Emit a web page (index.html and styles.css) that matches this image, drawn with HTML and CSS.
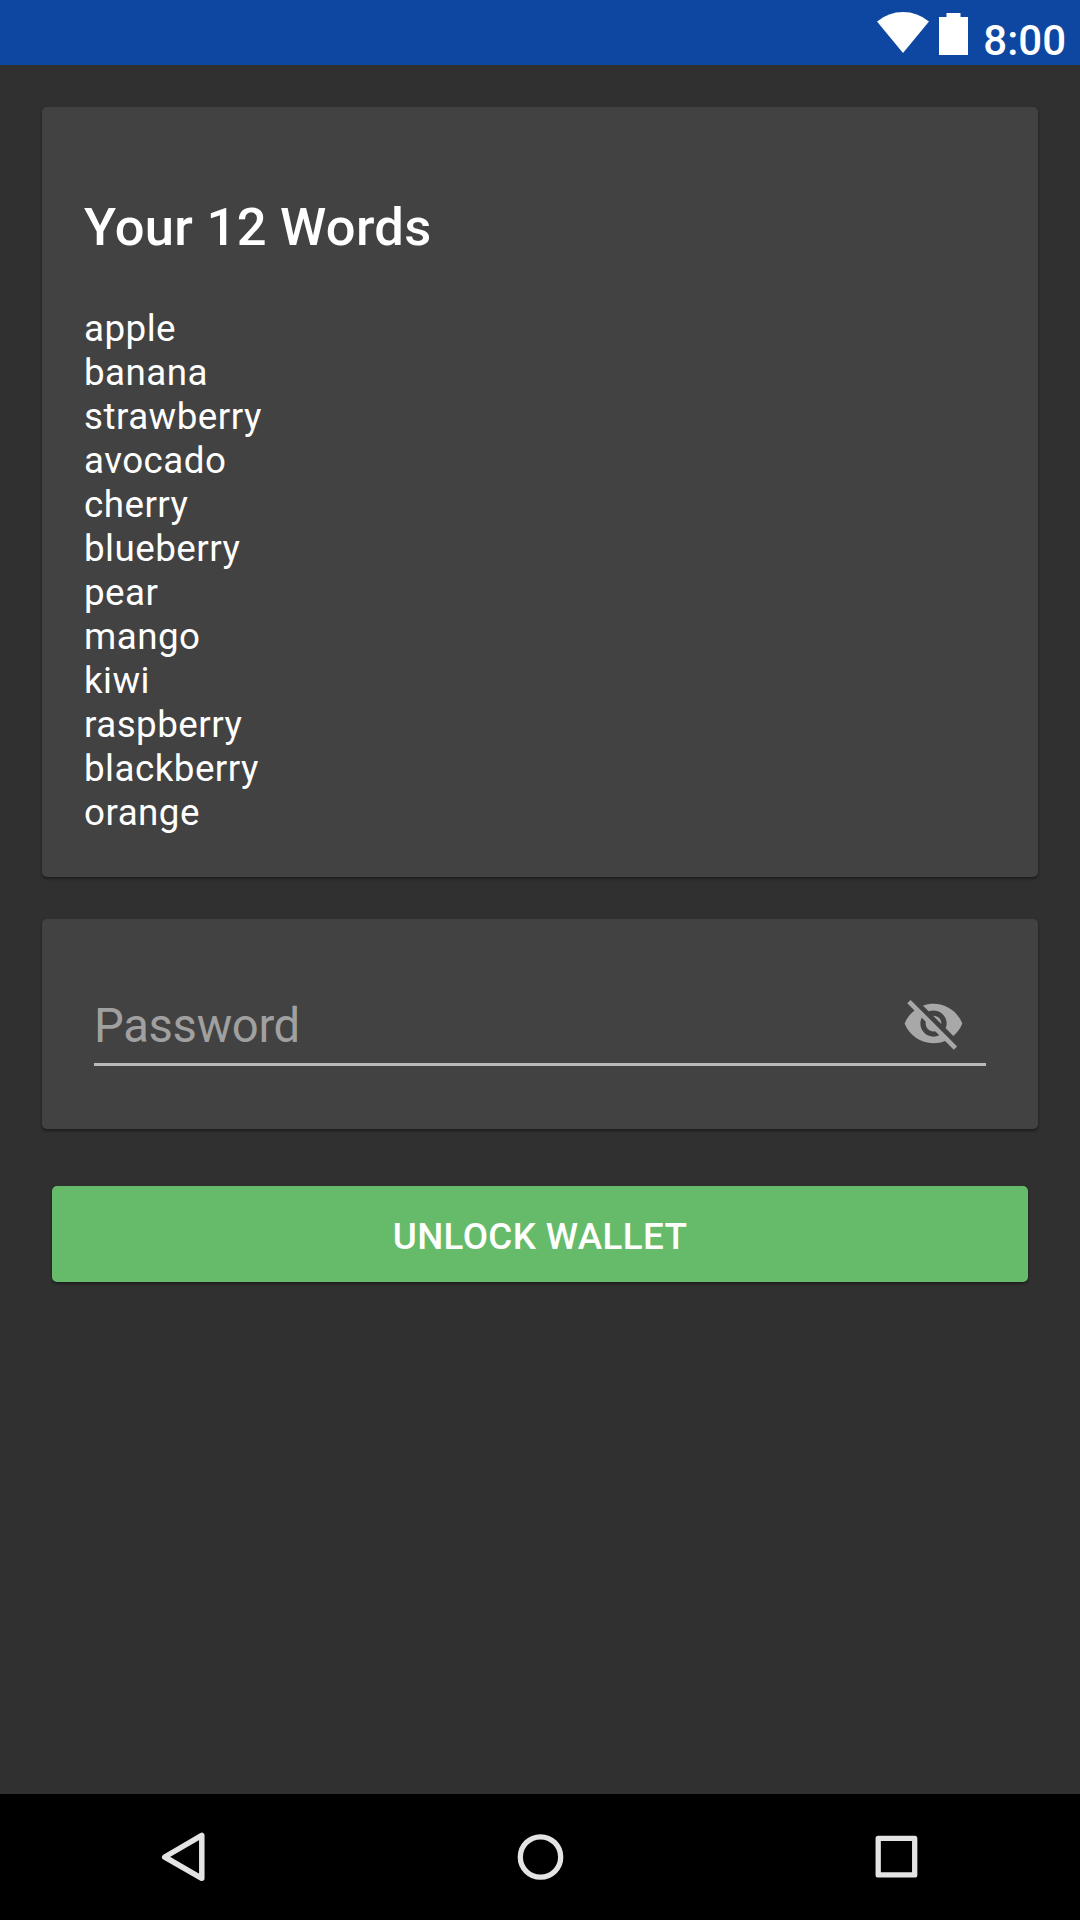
FILE: index.html
```html
<!DOCTYPE html>
<html lang="en">
<head>
<meta charset="utf-8">
<title>Unlock Wallet</title>
<link rel="stylesheet" href="styles.css">
</head>
<body>
<header class="status-bar">
  <svg class="wifi" width="52" height="42" viewBox="0 0 52 42"><path d="M0 9.500Q11.500 0 26 0T52 9.500L26 41Z" fill="#fff"/></svg>
  <svg class="battery" width="29" height="42" viewBox="0 0 29 42"><path d="M7.500 0H21.500V4H29V42H0V4H7.500Z" fill="#fff"/></svg>
  <span class="clock">8:00</span>
</header>
<main class="content">
  <section class="card words-card">
    <h1 class="title">Your 12 Words</h1>
    <ul class="words">
      <li>apple</li>
      <li>banana</li>
      <li>strawberry</li>
      <li>avocado</li>
      <li>cherry</li>
      <li>blueberry</li>
      <li>pear</li>
      <li>mango</li>
      <li>kiwi</li>
      <li>raspberry</li>
      <li>blackberry</li>
      <li>orange</li>
    </ul>
  </section>
  <section class="card password-card">
    <div class="field">
      <span class="hint">Password</span>
      <svg class="eye" width="63" height="63" viewBox="0 0 24 24"><path fill="#a8a8a8" d="M12 7c2.760 0 5 2.240 5 5 0 .65-.13 1.260-.36 1.830l2.920 2.920c1.510-1.260 2.700-2.890 3.430-4.750-1.730-4.390-6-7.500-11-7.500-1.400 0-2.740.25-3.980.7l2.160 2.160C10.740 7.130 11.350 7 12 7zM2 4.270l2.280 2.280.46.46C3.080 8.300 1.780 10.020 1 12c1.730 4.390 6 7.500 11 7.500 1.550 0 3.030-.3 4.380-.84l.42.42L19.730 22 21 20.730 3.270 3 2 4.270zM7.530 9.800l1.550 1.550c-.05.21-.08.43-.08.65 0 1.660 1.340 3 3 3 .22 0 .44-.03.65-.08l1.550 1.550c-.67.33-1.410.53-2.200.53-2.760 0-5-2.240-5-5 0-.79.2-1.530.53-2.200zm4.310-.78l3.150 3.150.02-.16c0-1.660-1.340-3-3-3l-.17.01z"/></svg>
    </div>
  </section>
  <button class="unlock">UNLOCK WALLET</button>
</main>
<nav class="nav-bar">
  <svg width="48" height="56" viewBox="0 0 48 56"><path d="M4.700 28L41.800 6.300V49.300Z" fill="none" stroke="#e4e4e4" stroke-width="5.500" stroke-linejoin="round"/></svg>
  <svg width="48" height="56" viewBox="0 0 48 56"><circle cx="24.500" cy="28" r="20.200" fill="none" stroke="#e4e4e4" stroke-width="5.300"/></svg>
  <svg width="48" height="56" viewBox="0 0 48 56"><rect x="6.200" y="9.400" width="36.500" height="36.500" fill="none" stroke="#e4e4e4" stroke-width="5.300" stroke-linejoin="round"/></svg>
</nav>
</body>
</html>
```
FILE: styles.css
```css
* {
  box-sizing: border-box;
}

body {
  display: flex;
  flex-direction: column;
  height: 1920px;
  margin: 0;
  background: #303030;
  color: #fff;
  font-family: Roboto, sans-serif;
}

.status-bar {
  display: flex;
  justify-content: flex-end;
  height: 65px;
  padding: 12px 14px 0 0;
  background: #0d47a1;
}

.battery {
  margin: 0.5px 15px 0 10.500px;
}

.clock {
  padding-top: 4px;
  font-size: 42px;
  font-weight: 500;
  line-height: 49px;
}

.content {
  display: flex;
  flex: 1;
  flex-direction: column;
  gap: 42px;
  padding: 42px;
}

.card {
  border-radius: 5px;
  background: #424242;
  box-shadow: 0 2px 3px rgba(0, 0, 0, 0.4);
}

.words-card {
  height: 770px;
  padding: 89px 42px 0;
}

.title {
  margin: 0 0 49px;
  font-size: 52.5px;
  font-weight: 500;
  line-height: 62px;
  letter-spacing: 0.3px;
}

.words {
  margin: 0;
  padding: 0;
  font-size: 36.75px;
  line-height: 44px;
  letter-spacing: 0.47px;
  list-style: none;
}

.password-card {
  height: 210px;
  padding: 63px 52px;
}

.field {
  display: flex;
  justify-content: space-between;
  height: 84px;
  padding-right: 21px;
  border-bottom: 3px solid #b9bbbb;
}

.hint {
  color: #a0a0a0;
  font-size: 47.25px;
  line-height: 88px;
  letter-spacing: -0.35px;
}

.eye {
  margin-top: 10px;
}

.unlock {
  height: 96px;
  margin: 15px 10px 0;
  padding: 5px 0 0;
  border: 0;
  border-radius: 5px;
  background: #66bb6a;
  box-shadow: 0 2px 3px rgba(0, 0, 0, 0.4);
  color: #fff;
  font: 500 36.75px/44px Roboto, sans-serif;
  letter-spacing: 0.38px;
}

.nav-bar {
  display: flex;
  align-items: center;
  justify-content: space-between;
  height: 126px;
  padding: 0 160px;
  background: #000;
}
```
